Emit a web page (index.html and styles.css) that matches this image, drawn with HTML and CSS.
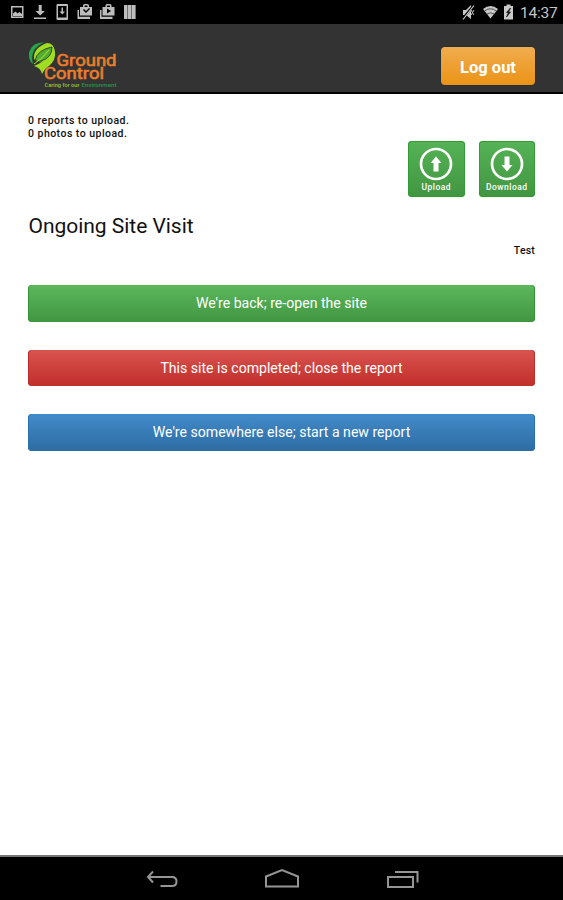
FILE: index.html
```html
<!DOCTYPE html>
<html lang="en">
<head>
<meta charset="utf-8">
<title>Ground Control</title>
<link rel="stylesheet" href="styles.css">
</head>
<body>
<div class="status">
  <svg class="status-icons" width="150" height="24" viewBox="0 0 150 24" fill="#bdbdbd">
    <path fill-rule="evenodd" d="M11 6h12.500v12H11zM12.500 7.500v9H22v-9z"/><path d="M13 16v-2.500l2.500-2 2 2 2-1.500 2.500 2V16z"/>
    <path d="M38.700 5h3v6h3.200l-4.700 4.500-4.700-4.500h3.200zM34 17.500h12v1.500H34z"/>
    <path fill-rule="evenodd" d="M57.500 4h9.500q1 0 1 1v14q0 1-1 1h-9.500q-1 0-1-1V5q0-1 1-1zM58 6v11.500h8.500V6z"/><path d="M61.500 7.500h1.500v4h2l-2.700 3-2.800-3h2z"/>
    <path fill-rule="evenodd" d="M80 7h3V5.500q0-1.500 1.500-1.500h3q1.500 0 1.500 1.500V7h3v8.500H80zM84.500 7h3V5.500h-3zM83 10l3 3 4-4-1-1-3 3-2-2z"/><path d="M77.500 10h1.500v6.800h11V19H77.500z"/>
    <path fill-rule="evenodd" d="M102.500 7h3V5.500q0-1.500 1.500-1.500h3q1.500 0 1.500 1.500V7h3v8.500h-12zM107 7h3V5.500h-3zM107 8.500v5l4-2.500z"/><path d="M100 10h1.500v6.800h11V19H100z"/>
    <path d="M124 5h3.600v14H124zM128 5h3.600v14H128zM132 5h3.600v14H132z"/>
  </svg>
  <div class="status-right">
    <svg width="56" height="24" viewBox="0 0 56 24" fill="#c8c8c8">
      <path d="M3 10h3l5-5v14l-5-4H3z"/><path d="M2 19.500 14 5" stroke="#000" stroke-width="2.200"/><path d="m3 19.500 11-14" stroke="#c8c8c8" stroke-width="1.200"/><path d="m11 10 3 5m0-5-3 5" stroke="#c8c8c8"/>
      <path d="M23 9q7.500-6 15 0l-7.500 9.500z"/><path d="M24.500 11q6-4.500 12 0M27 14q3.500-2.500 7 0" fill="none" stroke="#333" stroke-width=".8"/>
      <path d="M44 6h2.500V4.500h4V6H53v13.500h-9z"/><path d="m50.500 8-4 4.500h2l-2 4.500 4-5h-2z" fill="#111" stroke="#111" stroke-width=".7"/>
    </svg>
    <span class="clock">14:37</span>
  </div>
</div>
<header class="header">
  <svg class="logo" width="92" height="50" viewBox="0 0 92 50" role="img" aria-label="Ground Control">
    <path d="M16 1.500Q4 1 1 11.500q-1 8 4 11.500Q1 8 16 1.500z" fill="#27a34a"/>
    <path d="M6 18Q5 7 19 2q7 0 8 9 1 8-6 14-4 2-7 8-1-6-8-8 5-2 9-5-6 2-9-2z" fill="#a0dc22"/>
    <path d="M7 19.500Q9 9 24 6q0 11-11 14-3 1-6-.5z" fill="#50ad2f" stroke="#263526" stroke-width=".8"/>
    <path d="M6 23q8-5 15-14" fill="none" stroke="#b7e72c"/>
    <text class="logo-name" x="28.500" y="24.500" textLength="60" lengthAdjust="spacingAndGlyphs">Ground</text>
    <text class="logo-name" x="16" y="37.500" textLength="60" lengthAdjust="spacingAndGlyphs">Control</text>
    <text class="logo-tag" x="16.500" y="45.500" textLength="35" lengthAdjust="spacingAndGlyphs" fill="#9bc32b">Caring for our</text>
    <text class="logo-tag" x="53.500" y="45.500" textLength="35" lengthAdjust="spacingAndGlyphs" fill="#269746">Environment</text>
  </svg>
  <button class="logout">Log out</button>
</header>
<main class="content">
  <p class="pending">0 reports to upload.<br>0 photos to upload.</p>
  <div class="sync">
    <button class="tile">
      <svg width="36" height="36" viewBox="0 0 36 36"><circle cx="18" cy="18" r="15" fill="none" stroke="#fff" stroke-width="2.700"/><path d="m18 10.500 5.500 6.500h-3v8.500h-5V17h-3z" fill="#fff"/></svg>
      <span>Upload</span>
    </button>
    <button class="tile">
      <svg width="36" height="36" viewBox="0 0 36 36"><circle cx="18" cy="18" r="15" fill="none" stroke="#fff" stroke-width="2.700"/><path d="m18 25.500 5.500-6.500h-3v-8.500h-5V19h-3z" fill="#fff"/></svg>
      <span>Download</span>
    </button>
  </div>
  <h1 class="title">Ongoing Site Visit</h1>
  <p class="site">Test</p>
  <div class="actions">
    <button class="action green">We're back; re-open the site</button>
    <button class="action red">This site is completed; close the report</button>
    <button class="action blue">We're somewhere else; start a new report</button>
  </div>
</main>
<nav class="navbar">
  <svg width="563" height="43" viewBox="0 0 563 43" fill="none" stroke="#959595" stroke-width="2">
    <path d="M153 14.500 148 20l5 5.500M148 20h24q4.500 0 4.500 4.500T172 29h-11.500"/>
    <path d="M266 29.500V19.500l16-6.500 16 6.500v10z"/>
    <path d="M388 20h25v10h-25zM395 15h22.500V25.500"/>
  </svg>
</nav>
</body>
</html>
```
FILE: styles.css
```css
* { box-sizing: border-box; }
body {
  margin: 0;
  height: 900px;
  display: flex;
  flex-direction: column;
  overflow: hidden;
  background: #fff;
  color: #111;
  font-family: Roboto, "Liberation Sans", sans-serif;
}
svg { display: block; }
button { border: 0; margin: 0; padding: 0; color: #fff; font-family: inherit; }
p, h1 { margin: 0; }
.status {
  height: 24px;
  display: flex;
  justify-content: space-between;
  background: #000;
}
.status-right { display: flex; padding-right: 5px; gap: 4px; }
.clock { width: 38px; color: #c4c4c4; font-size: 15.500px; line-height: 26px; letter-spacing: -.2px; }
.header {
  height: 70px;
  display: flex;
  justify-content: space-between;
  align-items: flex-start;
  padding: 0 28px;
  background: #333;
  border-bottom: 2px solid #000;
}
.logo { margin-top: 17px; }
.logo-name { font-size: 16px; font-weight: 400; fill: #ec7d2c; stroke: #ec7d2c; stroke-width: .6px; }
.logo-tag { font-size: 5.500px; font-weight: 500; }
.logout {
  width: 94px;
  height: 38px;
  margin-top: 23px;
  border-radius: 4px;
  background: linear-gradient(#f0ad4e, #eb9316);
  box-shadow: 0 0 0 1px #263039;
  font-size: 16.500px;
  font-weight: 700;
  line-height: 41px;
}
.content { flex: 1; padding: 20px 28px 0; }
.pending { height: 27px; font-size: 10.500px; font-weight: 500; line-height: 13px; letter-spacing: .47px; }
.sync { display: flex; justify-content: flex-end; gap: 14px; }
.tile {
  width: 56.500px;
  height: 56px;
  display: flex;
  flex-direction: column;
  align-items: center;
  padding-top: 5px;
  border-radius: 4px;
  background: linear-gradient(#55b255, #419641);
  box-shadow: inset 0 0 0 1px #319b35;
  font-size: 8.500px;
  font-weight: 500;
  line-height: 10px;
  letter-spacing: .45px;
}
.title { margin-top: 16px; padding-left: .5px; font-size: 21px; font-weight: 400; line-height: 26px; letter-spacing: -.03px; }
.site { margin-top: 5px; text-align: right; font-size: 10.500px; font-weight: 500; line-height: 14px; letter-spacing: .2px; }
.actions { display: flex; flex-direction: column; gap: 28px; margin-top: 27px; }
.action { height: 36.600px; border-radius: 4px; font-size: 14.100px; line-height: 37px; }
.green { background: linear-gradient(#5cb85c, #419641); box-shadow: inset 1px 0 #329536, inset -1px 0 #329536; }
.red { background: linear-gradient(#d9534f, #c12e2a); box-shadow: inset 1px 0 #bd2c2a, inset -1px 0 #bd2c2a; }
.blue { background: linear-gradient(#428bca, #2d6ca2); box-shadow: inset 1px 0 #2871ad, inset -1px 0 #2871ad; }
.navbar { height: 45px; border-top: 2px solid #777; background: #000; }
```
